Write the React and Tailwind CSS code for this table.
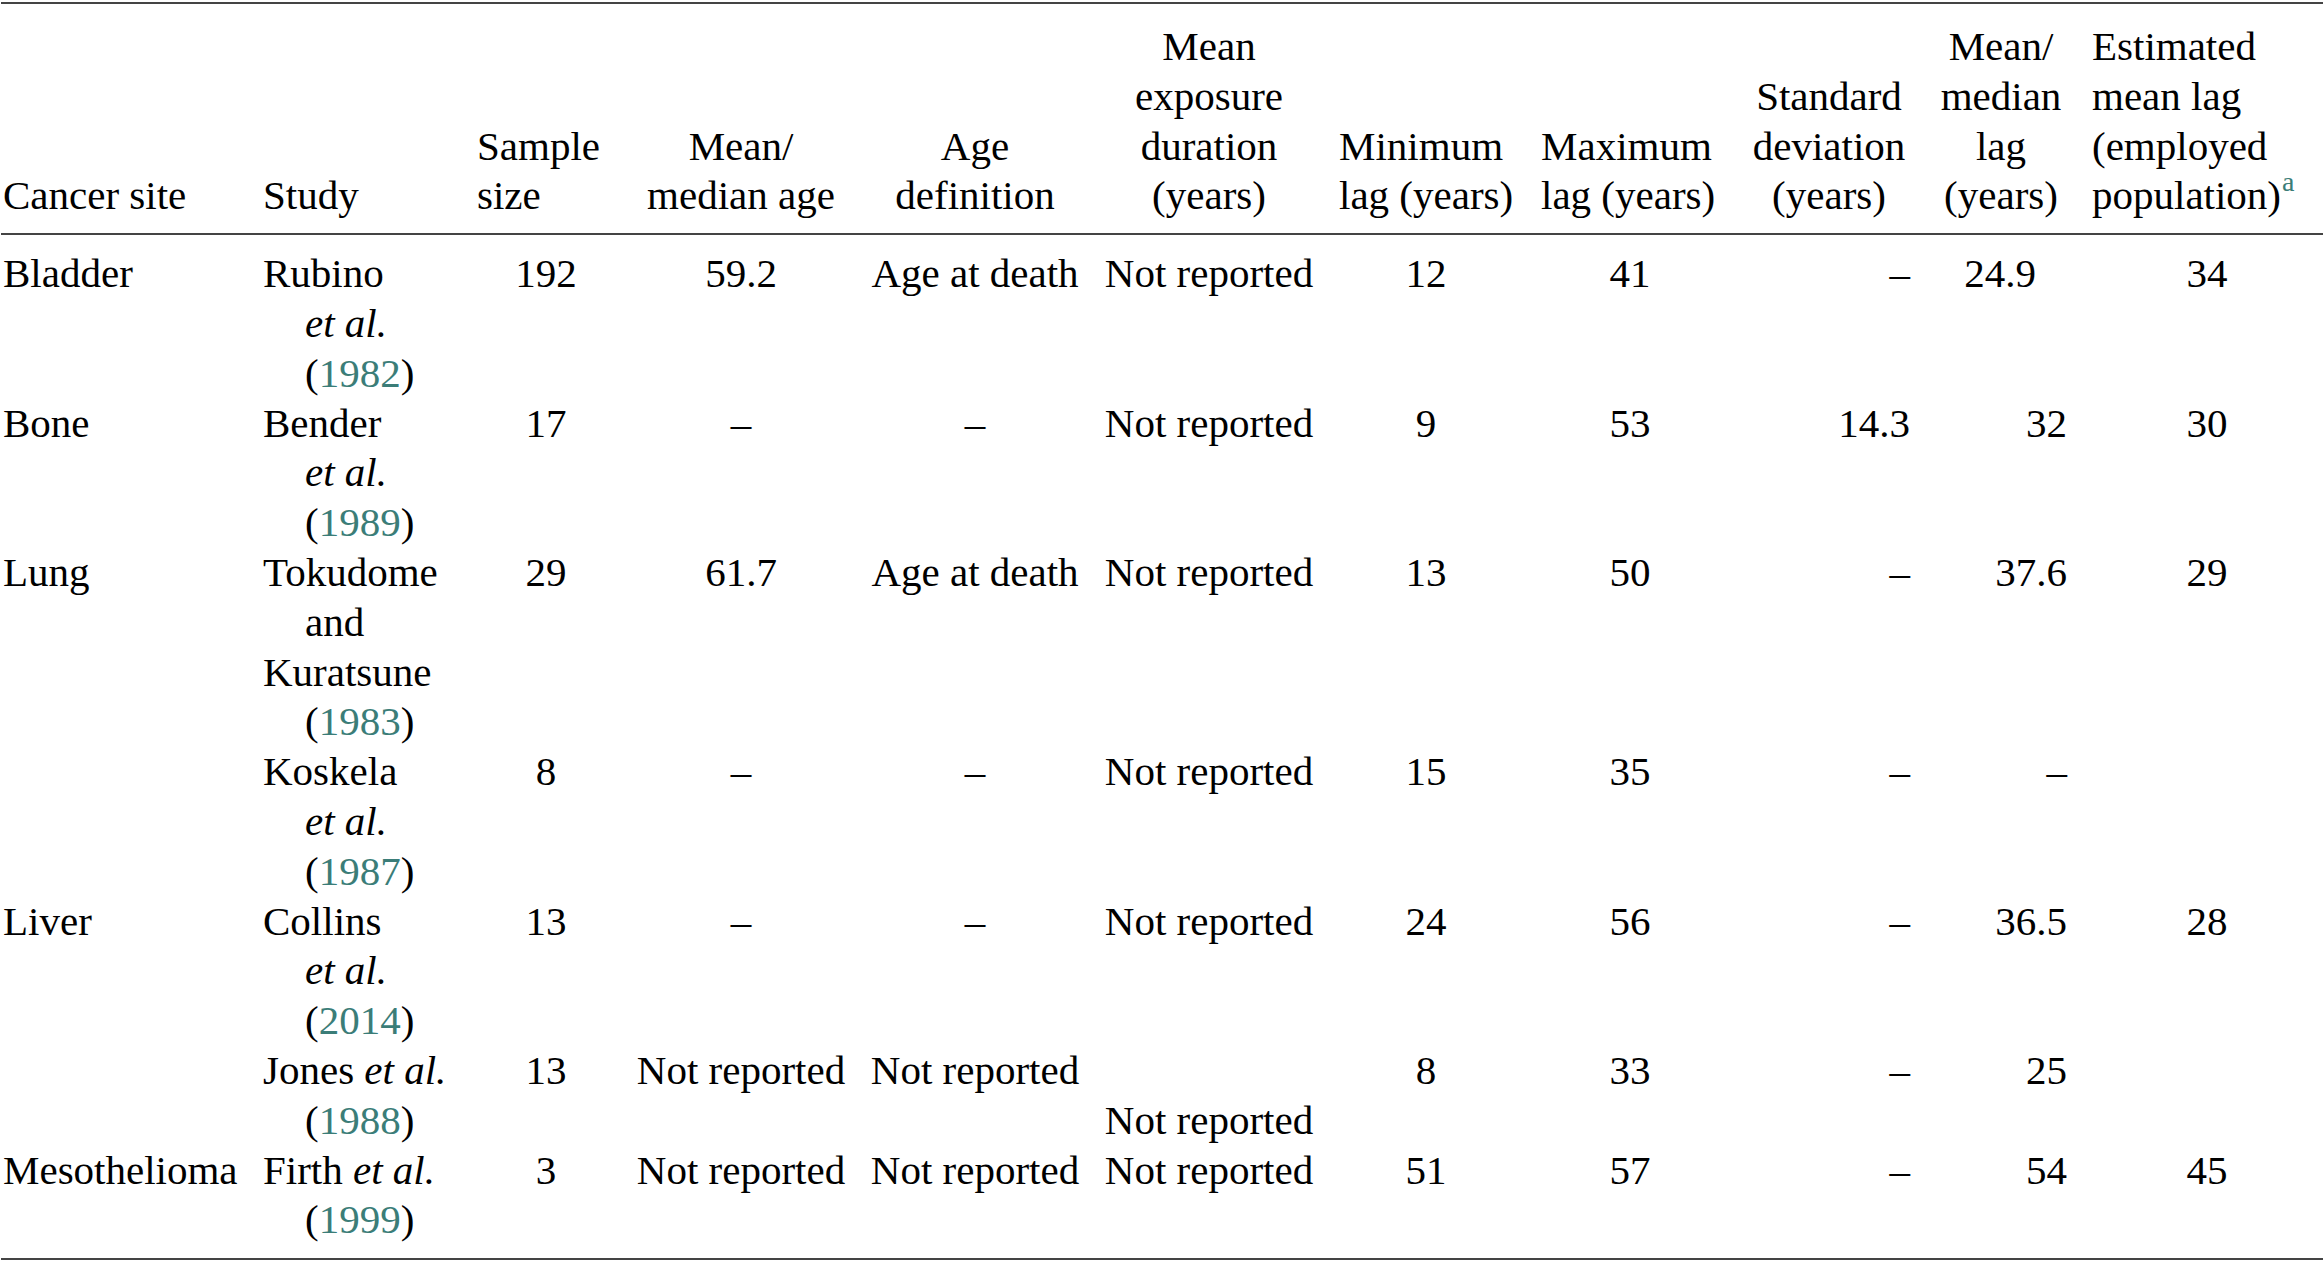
import React from 'react';

const Year = ({ y }) => (
  <span>
    (<span className="text-[#3b7d78]">{y}</span>)
  </span>
);

const Et = () => <i>et al.</i>;

const rows = [
  {
    site: 'Bladder',
    study: [
      { t: 'Rubino' },
      { t: <Et />, indent: true },
      { t: <Year y="1982" />, indent: true },
    ],
    n: '192', age: '59.2', def: 'Age at death', exp: 'Not reported',
    min: '12', max: '41', sd: '–', lag: '24.9', lagShift: true, est: '34',
  },
  {
    site: 'Bone',
    study: [
      { t: 'Bender' },
      { t: <Et />, indent: true },
      { t: <Year y="1989" />, indent: true },
    ],
    n: '17', age: '–', def: '–', exp: 'Not reported',
    min: '9', max: '53', sd: '14.3', lag: '32', est: '30',
  },
  {
    site: 'Lung',
    study: [
      { t: 'Tokudome' },
      { t: 'and', indent: true },
      { t: 'Kuratsune' },
      { t: <Year y="1983" />, indent: true },
    ],
    n: '29', age: '61.7', def: 'Age at death', exp: 'Not reported',
    min: '13', max: '50', sd: '–', lag: '37.6', est: '29',
  },
  {
    site: '',
    study: [
      { t: 'Koskela' },
      { t: <Et />, indent: true },
      { t: <Year y="1987" />, indent: true },
    ],
    n: '8', age: '–', def: '–', exp: 'Not reported',
    min: '15', max: '35', sd: '–', lag: '–', est: '',
  },
  {
    site: 'Liver',
    study: [
      { t: 'Collins' },
      { t: <Et />, indent: true },
      { t: <Year y="2014" />, indent: true },
    ],
    n: '13', age: '–', def: '–', exp: 'Not reported',
    min: '24', max: '56', sd: '–', lag: '36.5', est: '28',
  },
  {
    site: '',
    study: [
      { t: <>Jones <Et /></> },
      { t: <Year y="1988" />, indent: true },
    ],
    n: '13', age: 'Not reported', def: 'Not reported', exp: 'Not reported', expBottom: true,
    min: '8', max: '33', sd: '–', lag: '25', est: '',
  },
  {
    site: 'Mesothelioma',
    study: [
      { t: <>Firth <Et /></> },
      { t: <Year y="1999" />, indent: true },
    ],
    n: '3', age: 'Not reported', def: 'Not reported', exp: 'Not reported',
    min: '51', max: '57', sd: '–', lag: '54', est: '45',
  },
];

const th = 'align-bottom font-normal pt-[18px] pb-[12px] whitespace-nowrap';
const td = 'align-top whitespace-nowrap';

export default function App() {
  return (
    <div className="bg-white w-[2324px] min-h-[1265px] pt-[2px] text-black font-['Liberation_Serif','Times_New_Roman',serif] text-[41px] leading-[49.8px]">
      <table className="table-fixed border-collapse w-[2322px] ml-[1px] border-t-2 border-b-2 border-[#444]">
        <colgroup>
          <col className="w-[256px]" />
          <col className="w-[214px]" />
          <col className="w-[150px]" />
          <col className="w-[240px]" />
          <col className="w-[228px]" />
          <col className="w-[240px]" />
          <col className="w-[202px]" />
          <col className="w-[210px]" />
          <col className="w-[180px]" />
          <col className="w-[160px]" />
          <col className="w-[242px]" />
        </colgroup>
        <thead>
          <tr className="border-b-2 border-[#444]">
            <th className={`${th} text-left pl-[2px]`}>Cancer site</th>
            <th className={`${th} text-left pl-[6px]`}>Study</th>
            <th className={`${th} text-left pl-[6px]`}>
              Sample<br />size
            </th>
            <th className={`${th} text-center`}>
              Mean/<br />median age
            </th>
            <th className={`${th} text-center`}>
              Age<br />definition
            </th>
            <th className={`${th} text-center`}>
              Mean<br />exposure<br />duration<br />(years)
            </th>
            <th className={`${th} text-left pl-[10px]`}>
              Minimum<br />lag (years)
            </th>
            <th className={`${th} text-left pl-[10px]`}>
              Maximum<br />lag (years)
            </th>
            <th className={`${th} text-center pr-[4px]`}>
              Standard<br />deviation<br />(years)
            </th>
            <th className={`${th} text-center`}>
              Mean/<br />median<br />lag<br />(years)
            </th>
            <th className={`${th} text-left pl-[11px]`}>
              Estimated<br />mean lag<br />(employed<br />
              population)<sup className="text-[#3b7d78] text-[28px] leading-none relative -top-[18px] ml-[1px]">a</sup>
            </th>
          </tr>
        </thead>
        <tbody>
          {rows.map((r, i) => {
            const first = i === 0 ? 'pt-[14px]' : '';
            return (
              <tr key={i}>
                <td className={`${td} pl-[2px] ${first}`}>{r.site}</td>
                <td className={`${td} pl-[6px] ${first}`}>
                  {r.study.map((l, j) => (
                    <div key={j} className={l.indent ? 'pl-[42px]' : ''}>
                      {l.t}
                    </div>
                  ))}
                </td>
                <td className={`${td} text-center ${first}`}>{r.n}</td>
                <td className={`${td} text-center ${first}`}>{r.age}</td>
                <td className={`${td} text-center ${first}`}>{r.def}</td>
                <td className={`${r.expBottom ? 'align-bottom' : 'align-top'} whitespace-nowrap text-center ${first}`}>
                  {r.exp}
                </td>
                <td className={`${td} text-center pr-[8px] ${first}`}>{r.min}</td>
                <td className={`${td} text-center pr-[12px] ${first}`}>{r.max}</td>
                <td className={`${td} text-right pr-[11px] ${first}`}>{r.sd}</td>
                <td className={`${td} text-right ${r.lagShift ? 'pr-[45px]' : 'pr-[14px]'} ${first}`}>
                  {r.lag}
                </td>
                <td className={`${td} text-center pl-[10px] ${first}`}>{r.est}</td>
              </tr>
            );
          })}
          <tr>
            <td colSpan={11} className="h-[14px]"></td>
          </tr>
        </tbody>
      </table>
    </div>
  );
}
